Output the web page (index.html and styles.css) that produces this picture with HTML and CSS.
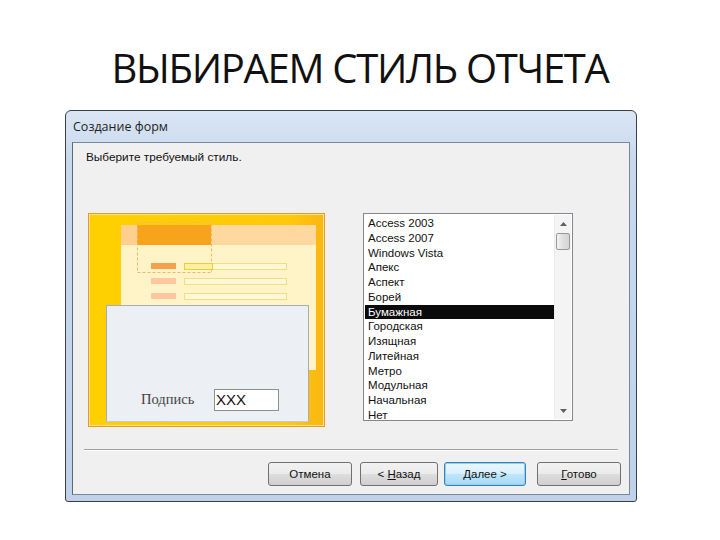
FILE: index.html
```html
<!DOCTYPE html>
<html lang="ru">
<head>
    <meta charset="UTF-8">
    <title>Выбираем стиль отчета</title>
    <link rel="stylesheet" href="styles.css">
</head>
<body>
    <h1 class="slide-title">ВЫБИРАЕМ СТИЛЬ ОТЧЕТА</h1>

    <div class="window">
        <div class="titlebar">Создание форм</div>
        <div class="client">
            <div class="prompt">Выберите требуемый стиль.</div>

            <div class="main">
                <div class="preview">
                    <svg class="preview-art" width="237" height="214" viewBox="0 0 237 214">
                        <defs>
                            <linearGradient id="yel" x1="0" y1="0" x2="1" y2="0">
                                <stop offset="0" stop-color="#ffd000"/>
                                <stop offset="0.85" stop-color="#ffc90a"/>
                                <stop offset="1" stop-color="#fbb514"/>
                            </linearGradient>
                        </defs>
                        <rect x="0.5" y="0.5" width="236" height="213" fill="url(#yel)" stroke="#e89a2a"/>
                        <rect x="1.5" y="1.5" width="234" height="211" fill="none" stroke="#ffe680"/>
                        <rect x="33" y="12" width="195" height="145" fill="#fff4c8"/>
                        <rect x="33" y="12" width="195" height="20" fill="#ffd8a0"/>
                        <rect x="33" y="12" width="16" height="20" fill="#ffcf90"/>
                        <rect x="49" y="12" width="74" height="20" fill="#f8a31c"/>
                        <rect x="49.5" y="9.5" width="74" height="50" fill="none" stroke="#e8bb6a" stroke-dasharray="3 2"/>
                        <rect x="63" y="50" width="25" height="6" fill="#f7a050"/>
                        <rect x="63" y="65" width="25" height="6" fill="#ffc8a0"/>
                        <rect x="63" y="80" width="25" height="6" fill="#ffc8a0"/>
                        <rect x="96.5" y="50.5" width="102" height="6" fill="#fff8d8" stroke="#f3df80"/>
                        <rect x="96.5" y="50.5" width="28" height="6" fill="#fff0a0" stroke="#e8cf40"/>
                        <rect x="96.5" y="65.5" width="102" height="6" fill="#fff8d8" stroke="#f3df80"/>
                        <rect x="96.5" y="80.5" width="102" height="6" fill="#fff8d8" stroke="#f3df80"/>
                    </svg>
                    <div class="preview-form">
                        <span class="caption">Подпись</span>
                        <span class="field">XXX</span>
                    </div>
                </div>

                <div class="listbox">
                    <ul class="items">
                        <li>Access 2003</li>
                        <li>Access 2007</li>
                        <li>Windows Vista</li>
                        <li>Апекс</li>
                        <li>Аспект</li>
                        <li>Борей</li>
                        <li class="selected">Бумажная</li>
                        <li>Городская</li>
                        <li>Изящная</li>
                        <li>Литейная</li>
                        <li>Метро</li>
                        <li>Модульная</li>
                        <li>Начальная</li>
                        <li>Нет</li>
                    </ul>
                    <div class="scrollbar">
                        <div class="arrow">
                            <svg width="7" height="4" viewBox="0 0 7 4"><path d="M0 4 L3.5 0 L7 4 Z" fill="#606060"/></svg>
                        </div>
                        <div class="thumb"></div>
                        <div class="track"></div>
                        <div class="arrow">
                            <svg width="7" height="4" viewBox="0 0 7 4"><path d="M0 0 L3.5 4 L7 0 Z" fill="#606060"/></svg>
                        </div>
                    </div>
                </div>
            </div>

            <div class="separator"></div>

            <div class="buttons">
                <button class="btn btn-cancel">Отмена</button>
                <button class="btn btn-back">&lt; <u>Н</u>азад</button>
                <button class="btn btn-next focused"><u>Д</u>алее &gt;</button>
                <button class="btn btn-done"><u>Г</u>отово</button>
            </div>
        </div>
    </div>
</body>
</html>
```

FILE: styles.css
```css
* {
    box-sizing: border-box;
    margin: 0;
    padding: 0;
}

body {
    width: 720px;
    height: 540px;
    background-color: #ffffff;
    font-family: "Liberation Sans", Arial, sans-serif;
    overflow: hidden;
}

.slide-title {
    margin-top: 40px;
    height: 70px;
    text-align: center;
    font-family: "Open Sans", "Noto Sans", sans-serif;
    font-weight: 400;
    font-size: 40px;
    line-height: 56px;
    color: #111111;
    letter-spacing: -1.3px;
}

/* окно мастера */
.window {
    margin-left: 65px;
    width: 572px;
    height: 392px;
    border: 1px solid #3a3f48;
    border-radius: 6px 6px 3px 3px;
    background: linear-gradient(to bottom, #dbe6f4 0%, #c8d9ee 12%, #bfd2ea 100%);
    display: flex;
    flex-direction: column;
}

.titlebar {
    height: 31px;
    padding-left: 7px;
    font-family: "Open Sans", "Noto Sans", sans-serif;
    font-size: 12.5px;
    line-height: 31px;
    color: #1e1e1e;
}

.client {
    flex: 1;
    margin: 0 6px 6px 6px;
    border: 1px solid #7a8798;
    border-left-color: #5c6878;
    background-color: #f0f0f0;
    display: flex;
    flex-direction: column;
}

.prompt {
    padding: 7px 0 0 13px;
    height: 70px;
    font-size: 11.8px;
    color: #111111;
}

.main {
    display: flex;
    padding-left: 15px;
    height: 236px;
}

.preview {
    position: relative;
    width: 237px;
    height: 214px;
}

.preview-art {
    display: block;
}

.preview-form {
    position: absolute;
    left: 18px;
    top: 92px;
    width: 203px;
    height: 117px;
    background-color: #eceff4;
    border: 1px solid #a8acb4;
    border-bottom-color: #c8ccd2;
    display: flex;
    align-items: flex-end;
    padding: 0 0 10px 34px;
}

.caption {
    font-family: "Liberation Serif", "Times New Roman", serif;
    font-size: 14.5px;
    color: #444444;
    width: 73px;
    padding-bottom: 3px;
}

.field {
    width: 65px;
    height: 22px;
    background-color: #ffffff;
    border: 1px solid #8e8f8f;
    font-size: 15px;
    line-height: 20px;
    padding-left: 1px;
    color: #111111;
}

.listbox {
    margin-left: 38px;
    width: 210px;
    height: 208px;
    background-color: #ffffff;
    border: 1px solid #828790;
    display: flex;
    padding: 1px;
    overflow: hidden;
}

.items {
    list-style: none;
    flex: 1;
    padding-top: 1px;
    overflow: hidden;
}

.items li {
    height: 14.75px;
    line-height: 14.75px;
    padding-left: 3px;
    font-size: 11.5px;
    color: #111111;
    white-space: nowrap;
}

.items li.selected {
    background-color: #0a0a0a;
    color: #ffffff;
}

.scrollbar {
    width: 17px;
    display: flex;
    flex-direction: column;
    background-color: #f4f4f4;
    border-left: 1px solid #ececec;
}

.arrow {
    height: 17px;
    display: flex;
    align-items: center;
    justify-content: center;
}

.thumb {
    height: 17px;
    margin: 1px 1px 0 1px;
    border: 1px solid #989898;
    border-radius: 2px;
    background: linear-gradient(to right, #f3f3f3, #dedede 50%, #d4d4d4);
}

.track {
    flex: 1;
}

.separator {
    margin: 0 11px 0 11px;
    border-top: 1px solid #a0a0a0;
    border-bottom: 1px solid #ffffff;
}

.buttons {
    display: flex;
    justify-content: flex-end;
    padding: 11px 8px 0 0;
}

.btn {
    height: 24px;
    font-family: "Liberation Sans", Arial, sans-serif;
    font-size: 11.5px;
    color: #111111;
    border: 1px solid #707070;
    border-radius: 3px;
    background: linear-gradient(to bottom, #f2f2f2 0%, #ebebeb 48%, #dddddd 52%, #cfcfcf 100%);
}

.btn-cancel {
    width: 84px;
    margin-right: 8px;
}

.btn-back {
    width: 78px;
    margin-right: 6px;
}

.btn-next {
    width: 82px;
    margin-right: 11px;
}

.btn-done {
    width: 84px;
}

.btn.focused {
    border-color: #3c7fb1;
    background: linear-gradient(to bottom, #eaf6fd 0%, #d9f0fc 48%, #bee6fd 52%, #a7d9f5 100%);
    box-shadow: inset 0 0 0 1px #8ed0f7;
}
```
